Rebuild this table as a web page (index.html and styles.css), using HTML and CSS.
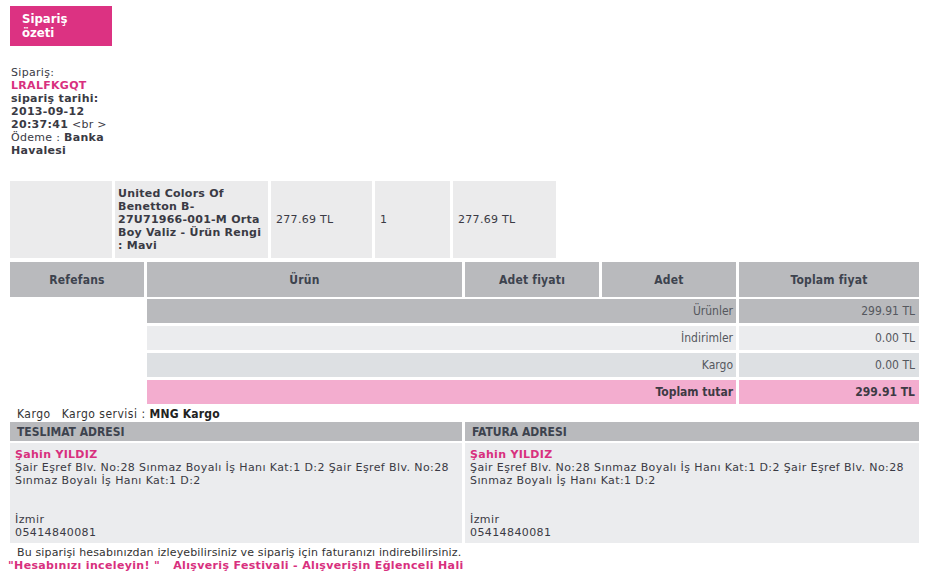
FILE: index.html
```html
<!DOCTYPE html>
<html lang="tr">
<head>
<meta charset="utf-8">
<title>Sipariş özeti</title>
<link rel="stylesheet" href="styles.css">
</head>
<body>
<div class="page">
  <div class="title-box">Sipariş özeti</div>

  <div class="order-info">
    Sipariş: <span class="pink-b">LRALFKGQT</span>
    <b>sipariş tarihi: 2013-09-12 20:37:41</b> &lt;br &gt;
    Ödeme : <b>Banka Havalesi</b>
  </div>

  <div class="product-row">
    <div class="pcell"></div>
    <div class="pcell pname"><span>United Colors Of Benetton B-<span class="nw">27U71966-001-M</span> Orta Boy Valiz - Ürün Rengi : Mavi</span></div>
    <div class="pcell">277.69 TL</div>
    <div class="pcell">1</div>
    <div class="pcell">277.69 TL</div>
  </div>

  <div class="head-row">
    <div class="hcell">Refefans</div>
    <div class="hcell">Ürün</div>
    <div class="hcell">Adet fiyatı</div>
    <div class="hcell">Adet</div>
    <div class="hcell">Toplam fiyat</div>
  </div>

  <div class="sum">
    <div class="sum-row r1"><div class="slabel">Ürünler</div><div class="sval">299.91 TL</div></div>
    <div class="sum-row r2"><div class="slabel">İndirimler</div><div class="sval">0.00 TL</div></div>
    <div class="sum-row r3"><div class="slabel">Kargo</div><div class="sval">0.00 TL</div></div>
    <div class="sum-row r4 bold"><div class="slabel">Toplam tutar</div><div class="sval">299.91 TL</div></div>
  </div>

  <div class="kargo"><span class="k1">Kargo</span>Kargo servisi : <b>MNG Kargo</b></div>

  <div class="addr">
    <div class="acol">
      <div class="ahead">TESLIMAT ADRESI</div>
      <div class="abody">
        <span class="pink-b">Şahin YILDIZ</span><br>
        Şair Eşref Blv. No:28 Sınmaz Boyalı İş Hanı Kat:1 D:2 Şair Eşref Blv. No:28 Sınmaz Boyalı İş Hanı Kat:1 D:2<br>
        <br><br>
        İzmir<br>
        05414840081
      </div>
    </div>
    <div class="acol">
      <div class="ahead">FATURA ADRESI</div>
      <div class="abody">
        <span class="pink-b">Şahin YILDIZ</span><br>
        Şair Eşref Blv. No:28 Sınmaz Boyalı İş Hanı Kat:1 D:2 Şair Eşref Blv. No:28 Sınmaz Boyalı İş Hanı Kat:1 D:2<br>
        <br><br>
        İzmir<br>
        05414840081
      </div>
    </div>
  </div>

  <div class="foot">Bu siparişi hesabınızdan izleyebilirsiniz ve sipariş için faturanızı indirebilirsiniz.</div>
  <div class="foot-links"><span>"Hesabınızı inceleyin! "</span><span>Alışveriş Festivali - Alışverişin Eğlenceli Hali</span></div>
</div>
</body>
</html>
```

FILE: styles.css
```css
html, body {
  margin: 0;
  padding: 0;
  background: #ffffff;
}
body {
  font-family: "DejaVu Sans", "Noto Sans", sans-serif;
  font-size: 11px;
  line-height: 13px;
  letter-spacing: 0.3px;
  color: #3a3a44;
}
.page {
  padding: 6px 10px 0 10px;
  width: 909px;
}
.title-box {
  width: 78px;
  height: 28px;
  padding: 6px 12px;
  background: #dc3282;
  color: #ffffff;
  font-family: "DejaVu Sans Condensed", "DejaVu Sans", sans-serif;
  font-weight: bold;
  font-size: 13px;
  line-height: 14px;
  letter-spacing: 0;
}
.order-info {
  width: 106px;
  margin: 20px 0 0 1px;
}
.order-info b { font-weight: bold; }
.pink-b {
  color: #d8307e;
  font-weight: bold;
}
.product-row {
  margin-top: 24px;
  display: grid;
  grid-template-columns: 102px 153px 101px 75px 103px;
  column-gap: 3px;
  height: 77px;
}
.pcell {
  background: #ebebec;
  display: flex;
  align-items: center;
  padding-left: 5px;
}
.pname {
  font-weight: bold;
  padding-left: 3px;
  padding-right: 1px;
  letter-spacing: 0.25px;
}
.nw { white-space: nowrap; }
.head-row {
  margin-top: 4px;
  display: grid;
  grid-template-columns: 134px 315px 134px 134px 180px;
  column-gap: 3px;
  height: 35px;
}
.hcell {
  background: #b9babd;
  display: flex;
  align-items: center;
  justify-content: center;
  padding-top: 2px;
  font-family: "DejaVu Sans Condensed", "DejaVu Sans", sans-serif;
  font-weight: bold;
  font-size: 12px;
  letter-spacing: 0.2px;
  color: #3d434e;
}
.sum {
  margin-top: 2px;
  margin-left: 137px;
  display: flex;
  flex-direction: column;
  gap: 3px;
}
.sum-row {
  display: grid;
  grid-template-columns: 589px 180px;
  column-gap: 3px;
  height: 24px;
  font-family: "DejaVu Sans Condensed", "DejaVu Sans", sans-serif;
  font-size: 12px;
  letter-spacing: 0;
  color: #55585e;
}
.slabel, .sval {
  display: flex;
  align-items: center;
  justify-content: flex-end;
  padding-right: 3px;
  padding-top: 1px;
}
.sval { padding-right: 4px; }
.r1 > div { background: #b9babd; }
.r2 > div { background: #ebecee; }
.r3 > div { background: #dde0e3; }
.r4 > div { background: #f3adcf; }
.r4 { font-weight: bold; color: #3d3a44; }
.kargo {
  margin-top: 3px;
  padding-left: 7px;
  font-family: "DejaVu Sans Condensed", "DejaVu Sans", sans-serif;
  font-size: 12px;
  line-height: 14px;
  letter-spacing: 0.5px;
  color: #333333;
}
.k1 { margin-right: 11px; }
.kargo b { color: #222222; letter-spacing: 0.2px; }
.addr {
  margin-top: 1px;
  display: grid;
  grid-template-columns: 452px 454px;
  column-gap: 3px;
}
.acol {
  display: flex;
  flex-direction: column;
  gap: 2px;
}
.ahead {
  background: #b9babd;
  height: 19px;
  display: flex;
  align-items: center;
  padding-left: 7px;
  padding-top: 1px;
  box-sizing: border-box;
  font-family: "DejaVu Sans Condensed", "DejaVu Sans", sans-serif;
  font-weight: bold;
  font-size: 12px;
  letter-spacing: 0;
  color: #3d434e;
}
.abody {
  background: #ebecee;
  height: 93px;
  padding: 5px 5px 2px 5px;
  color: #3a3a44;
  letter-spacing: 0.4px;
}
.abody .pink-b { letter-spacing: 0.3px; }
.foot {
  margin-top: 3px;
  padding-left: 7px;
  color: #333333;
  letter-spacing: 0.15px;
}
.foot-links {
  margin-left: -2px;
  display: flex;
  gap: 13px;
  color: #d8307e;
  font-weight: bold;
  letter-spacing: 0.35px;
}
```
